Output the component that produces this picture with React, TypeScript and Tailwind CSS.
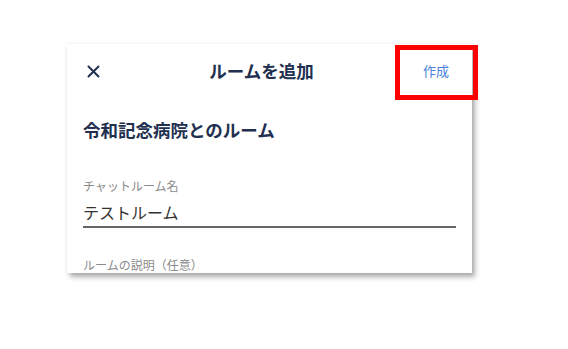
import React from "react";

export default function App() {
  const font = { fontFamily: '"Noto Sans CJK JP", "Noto Sans", sans-serif' };
  return (
    <div className="relative w-[568px] h-[349px] bg-white pl-[67px] pt-[44px]" style={font}>
      <div className="w-[405px] h-[229px] bg-white overflow-hidden shadow-[3px_4px_5px_rgba(0,0,0,0.32),0_0_3px_rgba(0,0,0,0.08)]">
        <div className="flex items-center h-[54px] pl-[20px] pr-[23px]">
          <svg width="13" height="13" viewBox="0 0 13 13" className="shrink-0">
            <path d="M1.5 1.5 L11.5 11.5 M11.5 1.5 L1.5 11.5" stroke="#22304f" strokeWidth="2" strokeLinecap="round" />
          </svg>
          <div className="flex-1 text-center text-[17.5px] font-bold leading-[24px] text-[#22304f]">ルームを追加</div>
          <div className="w-[26px] text-[13px] leading-[18px] text-[#4a80de] whitespace-nowrap">作成</div>
        </div>
        <div className="px-[16px]">
          <div className="mt-[20px] text-[17.5px] font-bold leading-[24px] text-[#22304f]">令和記念病院とのルーム</div>
          <div className="mt-[36px] text-[12px] leading-[16px] text-[#8a8a8a]">チャットルーム名</div>
          <div className="mt-[7px] w-[373px] border-b-2 border-[#666666] pb-[3px] text-[16px] leading-[22px] text-[#333333]">テストルーム</div>
          <div className="mt-[29px] text-[12px] leading-[16px] text-[#8a8a8a]">ルームの説明（任意）</div>
        </div>
      </div>
      <div className="absolute left-[395px] top-[45px] w-[83px] h-[55px] border-[5px] border-[#ff0000]" />
    </div>
  );
}
